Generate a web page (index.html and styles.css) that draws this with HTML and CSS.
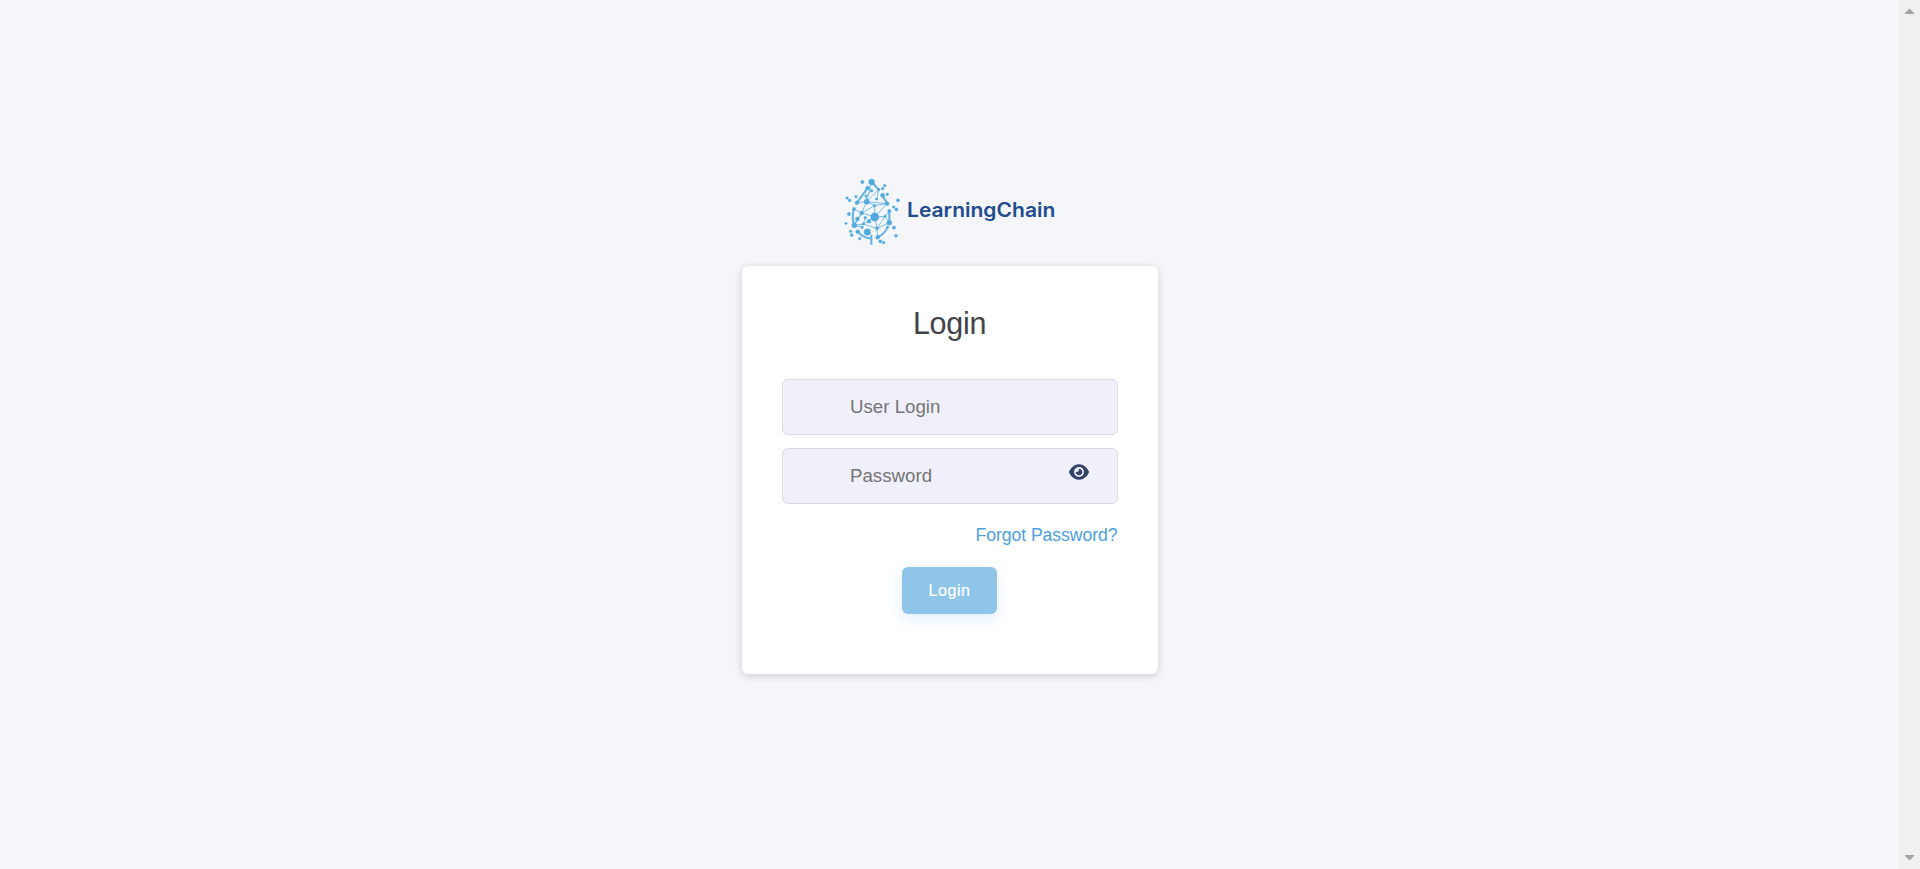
FILE: index.html
```html
<!DOCTYPE html>
<html lang="en">
<head>
<meta charset="utf-8">
<title>LearningChain</title>
<link rel="stylesheet" href="styles.css">
</head>
<body>
<main class="page">
  <svg class="logo" viewBox="0 0 690 240" role="img" aria-label="LearningChain">
    <g class="links-bold">
      <path d="M110 36L131 59M98 54L66 98M142 76L157 101M57 117Q49 143 58 166M163 123V158M68 185Q84 204 106 205M109 194V224M158 171Q151 190 128 202"/>
    </g>
    <g class="links">
      <path d="M110 36L95 95M110 62L93 78L95 95M131 59L125 87M131 59L95 95M66 98L95 95L157 101L119 107L80 129M95 95L119 107V141M95 95L80 129L57 117M80 129L119 141L157 101M119 141L150 139L163 158L126 175L119 141M150 139L126 175L85 162L58 166L81 172M85 162L119 141M85 162L91 143M80 129L67 147L58 166M126 175L128 202M150 139L163 123M80 129L58 166"/>
    </g>
    <g class="nodes">
      <circle cx="110" cy="36" r="9"/><circle cx="119" cy="141" r="12.5"/><circle cx="97" cy="186" r="10"/>
      <circle cx="95" cy="95" r="8"/><circle cx="58" cy="166" r="7.5"/><circle cx="163" cy="158" r="7.5"/>
      <circle cx="98" cy="54" r="6"/><circle cx="143" cy="76" r="6.5"/><circle cx="66" cy="98" r="6"/>
      <circle cx="80" cy="129" r="6"/><circle cx="102" cy="154" r="6"/><circle cx="67" cy="147" r="6"/>
      <circle cx="157" cy="101" r="5.5"/><circle cx="68" cy="185" r="6"/><circle cx="128" cy="202" r="6"/>
      <circle cx="57" cy="117" r="5"/><circle cx="163" cy="123" r="5"/><circle cx="126" cy="175" r="5"/>
      <circle cx="82" cy="36" r="5"/><circle cx="131" cy="59" r="4"/><circle cx="110" cy="62" r="4"/>
      <circle cx="125" cy="87" r="4"/><circle cx="93" cy="78" r="4"/><circle cx="119" cy="107" r="4"/>
      <circle cx="150" cy="139" r="4"/><circle cx="91" cy="143" r="4"/><circle cx="85" cy="162" r="4"/>
      <circle cx="81" cy="172" r="4"/><circle cx="149" cy="47" r="4"/><circle cx="143" cy="56" r="4"/>
      <circle cx="63" cy="80" r="4"/><circle cx="36" cy="84" r="4"/><circle cx="44" cy="91" r="4.5"/>
      <circle cx="157" cy="73" r="4"/><circle cx="189" cy="91" r="5"/><circle cx="176" cy="111" r="4"/>
      <circle cx="184" cy="118" r="5"/><circle cx="42" cy="132" r="5"/><circle cx="33" cy="160" r="3.5"/>
      <circle cx="47" cy="184" r="4"/><circle cx="50" cy="195" r="4.5"/><circle cx="74" cy="206" r="4"/>
      <circle cx="158" cy="171" r="3.5"/><circle cx="177" cy="173" r="5"/><circle cx="183" cy="197" r="4.5"/>
      <circle cx="136" cy="214" r="5"/><circle cx="146" cy="218" r="4"/>
    </g>
    <text class="brand" x="216" y="142" textLength="445" lengthAdjust="spacingAndGlyphs">LearningChain</text>
  </svg>
  <form class="card">
    <h1 class="title">Login</h1>
    <div class="fields">
      <input class="field" type="text" placeholder="User Login">
      <div class="password">
        <input class="field" type="password" placeholder="Password">
        <svg class="eye" viewBox="0 0 576 512"><path d="M288 32c-80.8 0-145.5 36.8-192.6 80.6C48.6 156 17.3 208 2.5 243.7c-3.3 7.9-3.3 16.7 0 24.6C17.3 304 48.6 356 95.4 399.4C142.5 443.2 207.2 480 288 480s145.5-36.8 192.6-80.6c46.8-43.5 78.1-95.4 93-131.1c3.3-7.9 3.3-16.7 0-24.6c-14.9-35.7-46.2-87.7-93-131.1C433.5 68.8 368.8 32 288 32zM144 256a144 144 0 1 1 288 0 144 144 0 1 1-288 0zm144-64c0 35.3-28.7 64-64 64c-7.1 0-13.9-1.2-20.3-3.3c-5.5-1.8-11.9 1.6-11.7 7.4c.3 6.9 1.3 13.8 3.2 20.7c13.7 51.2 66.4 81.6 117.6 67.9s81.6-66.4 67.9-117.6c-11.1-41.5-47.8-69.4-88.6-71.1c-5.8-.2-9.2 6.1-7.4 11.7c2.1 6.4 3.3 13.2 3.3 20.3z"/></svg>
      </div>
    </div>
    <a class="forgot">Forgot Password?</a>
    <button class="submit" type="button">Login</button>
  </form>
</main>
<aside class="scrollbar">
  <svg class="arrow" viewBox="0 0 9 5"><path d="M0 5V4L4 0H5L9 4V5z"/></svg>
  <svg class="arrow" viewBox="0 0 9 5"><path d="M0 0V1L4 5H5L9 1V0z"/></svg>
</aside>
</body>
</html>
```

FILE: styles.css
```css
* { box-sizing: border-box; }
body {
  margin: 0;
  height: 100vh;
  display: flex;
  overflow: hidden;
  background: #f4f6fa;
  font-family: "Liberation Sans", Arial, sans-serif;
}
.page {
  flex: 1;
  display: flex;
  flex-direction: column;
  align-items: center;
  padding-top: 170px;
}
.logo { width: 230px; height: 80px; margin-bottom: 16px; flex: none; }
.links, .links-bold { fill: none; stroke: #52a9e0; stroke-width: 2.6; opacity: .85; }
.links-bold { stroke-width: 6.5; }
.nodes { fill: #52a9e0; stroke: #52a9e0; stroke-width: 1; }
.brand { font-family: Inter, sans-serif; font-weight: 600; font-size: 59px; fill: #214b8c; }
.card {
  width: 416px;
  height: 408px;
  flex: none;
  display: flex;
  flex-direction: column;
  padding: 40px;
  background: #fff;
  border-radius: 6px;
  box-shadow: 0 2px 8px rgba(0, 0, 0, .16);
}
.title {
  margin: 0;
  height: 36px;
  line-height: 34px;
  text-align: center;
  font-size: 30.5px;
  letter-spacing: -.3px;
  font-weight: 400;
  color: #404348;
}
.fields { margin-top: 37px; display: grid; gap: 13px; }
.field {
  display: block;
  width: 100%;
  height: 56px;
  padding: 0 67px 0 67.5px;
  border: 1px solid #d8dce6;
  border-radius: 6px;
  background: #f0f0fa;
  font: 18.7px "Liberation Sans", Arial, sans-serif;
}
.field::placeholder { color: #757575; }
.password { position: relative; }
.eye { position: absolute; right: 29px; top: 15px; width: 20px; height: 18px; fill: #344168; }
.forgot { align-self: flex-end; margin-top: 20px; line-height: 22px; font-size: 17.6px; letter-spacing: -.05px; color: #4da0de; }
.submit {
  align-self: center;
  margin-top: 21px;
  width: 95px;
  height: 47px;
  padding: 0;
  border: 0;
  border-radius: 6px;
  background: #8ec5e9;
  box-shadow: 0 5px 15px rgba(77, 160, 255, .18);
  color: #fff;
  font: 16px "Liberation Sans", Arial, sans-serif;
  letter-spacing: .6px;
  -webkit-text-stroke: .2px #fff;
}
.scrollbar {
  width: 21px;
  flex: none;
  display: flex;
  flex-direction: column;
  align-items: center;
  justify-content: space-between;
  padding: 9px 0;
  background: #f0f0f0;
}
.arrow { width: 9px; height: 5px; fill: #a3a3a3; }
```
